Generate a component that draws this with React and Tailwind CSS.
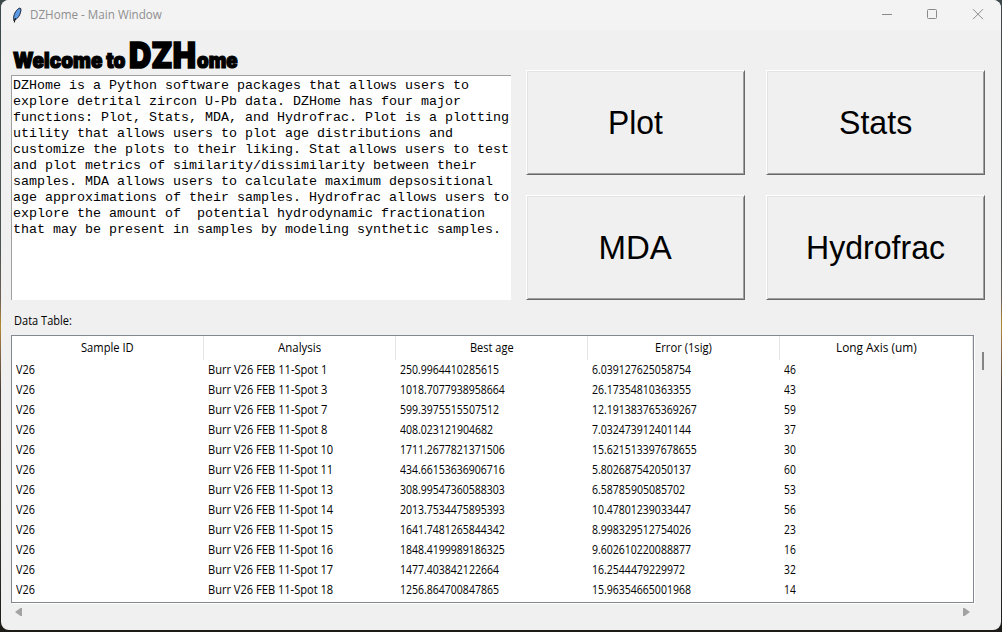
import React, { useLayoutEffect, useRef, useState } from "react";

const UI = "font-['Open_Sans','Noto_Sans',sans-serif]";

/* Squeezes a run of text horizontally to the given width. */
function Fit({ w, className = "", children }) {
  const ref = useRef(null);
  const [s, setS] = useState(1);
  useLayoutEffect(() => {
    setS(w / ref.current.offsetWidth);
  }, [w]);
  return (
    <span className="inline-block whitespace-pre" style={{ width: w }}>
      <span ref={ref} className={"inline-block origin-left whitespace-pre " + className} style={{ transform: `scaleX(${s})` }}>
        {children}
      </span>
    </span>
  );
}

const about = `DZHome is a Python software packages that allows users to
explore detrital zircon U-Pb data. DZHome has four major
functions: Plot, Stats, MDA, and Hydrofrac. Plot is a plotting
utility that allows users to plot age distributions and
customize the plots to their liking. Stat allows users to test
and plot metrics of similarity/dissimilarity between their
samples. MDA allows users to calculate maximum depsositional
age approximations of their samples. Hydrofrac allows users to
explore the amount of  potential hydrodynamic fractionation
that may be present in samples by modeling synthetic samples.`;

const columns = [
  ["Sample ID", 53],
  ["Analysis", 43],
  ["Best age", 44],
  ["Error (1sig)", 57],
  ["Long Axis (um)", 81],
];

const rows = [
  ["1", "250.9964410285615", "6.039127625058754", "46"],
  ["3", "1018.7077938958664", "26.17354810363355", "43"],
  ["7", "599.3975515507512", "12.191383765369267", "59"],
  ["8", "408.023121904682", "7.032473912401144", "37"],
  ["10", "1711.2677821371506", "15.621513397678655", "30"],
  ["11", "434.66153636906716", "5.802687542050137", "60"],
  ["13", "308.99547360588303", "6.58785905085702", "53"],
  ["14", "2013.7534475895393", "10.47801239033447", "56"],
  ["15", "1641.7481265844342", "8.998329512754026", "23"],
  ["16", "1848.4199989186325", "9.602610220088877", "16"],
  ["17", "1477.403842122664", "16.2544479229972", "32"],
  ["18", "1256.864700847865", "15.96354665001968", "14"],
];

const numWidth = (t) => (t.includes(".") ? (t.length - 1) * 6 + 3 : t.length * 6);

function BigButton({ label, w }) {
  return (
    <button className="flex h-[105px] w-[219px] items-center justify-center border border-t-white border-l-white border-r-[#696969] border-b-[#696969] bg-[#f0f0f0] pr-px pb-px text-[33px] leading-none text-black shadow-[inset_1px_1px_0_#e3e3e3,inset_-1px_-1px_0_#a0a0a0] font-['Liberation_Sans',Arial,sans-serif]">
      <Fit w={w}>{label}</Fit>
    </button>
  );
}

export default function App() {
  return (
    <div className="h-[632px] w-[1002px] overflow-hidden bg-[linear-gradient(180deg,#3c484a_0px,#4d5550_250px,#6f6156_300px,#b38a2e_325px,#8a6a4a_350px,#4a4038_390px,#3a3a35_500px,#1c1b18_632px)] pr-px pl-px">
      <div className="flex h-[630px] w-[1000px] flex-col overflow-hidden rounded-[8px] bg-[#f0f0f0]">
        <header className="flex h-[30px] shrink-0 items-center bg-[#f3f3f3]">
          <svg className="ml-[9px] h-4 w-4" viewBox="0 0 16 16">
            <path d="M4 14 L3.6 10.500 C4 6.500 6.800 1.800 10 1 C11.6 1.200 11 4.500 9.800 7.500 C8.600 10.200 7 12 5 12.500 Z" fill="#5b9ae6" stroke="#1b2433" strokeWidth="1" />
            <path d="M4.300 15.500 L5.400 11" fill="none" stroke="#101010" strokeWidth="1" />
          </svg>
          <div className={"ml-[4px] text-[12px] leading-[30px] text-[#8f8f8f] " + UI}>
            <Fit w={132}>DZHome - Main Window</Fit>
          </div>
          <div className="ml-auto flex items-center text-[#8a8a8a]">
            <svg className="h-[30px] w-[45px]" viewBox="0 0 45 30"><path d="M17 14.5h10" stroke="currentColor" /></svg>
            <svg className="h-[30px] w-[45px]" viewBox="0 0 45 30"><rect x="17.5" y="9.5" width="9" height="9" rx="1" fill="none" stroke="currentColor" /></svg>
            <svg className="h-[30px] w-[46px]" viewBox="0 0 46 30"><path d="M18 9.2l10 10M28 9.2l-10 10" stroke="currentColor" /></svg>
          </div>
        </header>

        <main className="flex flex-col pl-[10px]">
          <div className="flex">
            <section className="w-[500px]">
              <h1 className="flex h-[45px] items-baseline pt-[4px] pl-[2px] leading-[42px] font-black text-black font-['Inter',sans-serif]">
                <Fit w={112} className="text-[21px] [-webkit-text-stroke:1.2px_#000]">Welcome to</Fit>
                <span className="w-[4px]" />
                <Fit w={67} className="text-[35px] [-webkit-text-stroke:1.6px_#000]">DZH</Fit>
                <span className="w-px" />
                <Fit w={41} className="text-[21px] [-webkit-text-stroke:1.2px_#000]">ome</Fit>
              </h1>
              <pre className="h-[225px] w-[500px] border-t border-l border-[#a0a0a0] bg-white pt-[2px] pl-px text-[13.333px] leading-[16px] text-black font-['Liberation_Mono','Courier_New',monospace]">{about}</pre>
            </section>
            <section className="mt-[40px] ml-[15px] grid grid-cols-[219px_219px] gap-x-[21px] gap-y-[20px]">
              <BigButton label="Plot" w={55} />
              <BigButton label="Stats" w={73} />
              <BigButton label="MDA" w={73} />
              <BigButton label="Hydrofrac" w={139} />
            </section>
          </div>

          <div className={"flex h-[35px] items-center pt-[6px] pl-[3px] text-[12px] leading-[20px] text-black " + UI}>
            <Fit w={58}>Data Table:</Fit>
          </div>

          <div className="flex">
            <div className={"h-[268px] w-[963px] border border-[#828790] bg-white text-[12px] text-black shadow-[1px_1px_0_#fff] " + UI}>
              <div className="grid h-[24px] grid-cols-[192px_192px_192px_192px_193px]">
                {columns.map(([c, w]) => (
                  <div key={c} className="flex items-center justify-center border-r border-[#e5e5e5] leading-[24px]">
                    <Fit w={w}>{c}</Fit>
                  </div>
                ))}
              </div>
              {rows.map(([spot, age, err, axis]) => (
                <div key={spot} className="grid h-[20px] grid-cols-[192px_192px_192px_192px_193px] pl-[4px] leading-[20px]">
                  <div><Fit w={19}>V26</Fit></div>
                  <div><Fit w={113.5 + spot.length * 6}>{"Burr V26 FEB 11-Spot " + spot}</Fit></div>
                  <div><Fit w={numWidth(age)}>{age}</Fit></div>
                  <div><Fit w={numWidth(err)}>{err}</Fit></div>
                  <div><Fit w={numWidth(axis)}>{axis}</Fit></div>
                </div>
              ))}
            </div>
            <div className="mt-[17px] ml-[8px] h-[18px] w-[2px] bg-[#858585]" />
          </div>

          <div className="flex w-[963px] justify-between pt-[5px] pr-[4px] pl-[4px]">
            <svg className="h-[8px] w-[7px]" viewBox="0 0 7 8"><path d="M0 4L5.5 0H7V8H5.5Z" fill="#a3a3a3" /></svg>
            <svg className="h-[8px] w-[7px]" viewBox="0 0 7 8"><path d="M7 4L1.500 0H0V8H1.500Z" fill="#a3a3a3" /></svg>
          </div>
        </main>
      </div>
    </div>
  );
}
